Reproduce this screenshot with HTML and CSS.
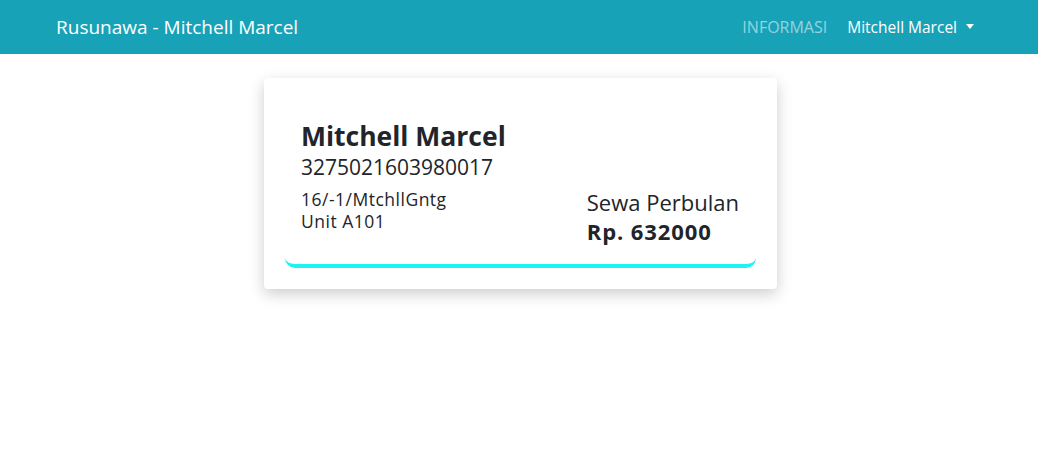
FILE: index.html
```html
<!DOCTYPE html>
<html>
<head>
<meta charset="utf-8">
<link rel="stylesheet" href="styles.css">
</head>
<body>
<nav class="navbar">
  <div class="brand">Rusunawa - Mitchell Marcel</div>
  <div class="nav-right">
    <span class="nav-link">INFORMASI</span>
    <span class="nav-user">Mitchell Marcel <span class="caret"></span></span>
  </div>
</nav>
<main class="main">
  <div class="card">
    <div class="inner">
      <div class="name">Mitchell Marcel</div>
      <div class="nik">3275021603980017</div>
      <div class="row">
        <div class="addr">
          <div>16/-1/MtchllGntg</div>
          <div>Unit A101</div>
        </div>
        <div class="rent">
          <div class="rent-label">Sewa Perbulan</div>
          <div class="rent-value">Rp. 632000</div>
        </div>
      </div>
    </div>
  </div>
</main>
</body>
</html>
```

FILE: styles.css
```css
* { box-sizing: border-box; }
body {
  margin: 0;
  font-family: "Open Sans", "Noto Sans", sans-serif;
  color: #212529;
  background: #fff;
}
.navbar {
  height: 54px;
  background: #17a2b8;
  display: flex;
  align-items: center;
  justify-content: space-between;
  padding: 0 64px 0 56px;
}
.brand {
  color: #fff;
  font-size: 19px;
}
.nav-right {
  display: flex;
  align-items: center;
  gap: 20px;
}
.nav-link { color: rgba(255,255,255,0.55); font-size: 16px; }
.nav-user { color: #fff; display: flex; align-items: center; gap: 9px; font-size: 15.5px; }
.caret {
  width: 0; height: 0;
  border-left: 4px solid transparent;
  border-right: 4px solid transparent;
  border-top: 5px solid #fff;
  margin-top: -2px;
}
.main {
  display: flex;
  justify-content: center;
  padding: 24px 0 60px;
}
.card {
  width: 513px;
  margin-left: 3px;
  background: #fff;
  border-radius: 4px;
  box-shadow: 0 5px 15px rgba(0,0,0,0.2);
  padding: 21px 21px 21px 21px;
}
.inner {
  border-bottom: 4px solid #1ef2f2;
  border-radius: 0 0 10px 10px;
  padding: 20px 16px 18px 16px;
}
.name {
  font-size: 26.5px;
  font-weight: 700;
  line-height: 34px;
}
.nik {
  font-size: 21px;
  line-height: 28px;
}
.row {
  display: flex;
  justify-content: space-between;
  margin-top: 7px;
}
.addr {
  font-size: 17.5px;
  line-height: 22px;
  letter-spacing: 0.5px;
}
.rent {
  margin-top: 0;
  margin-right: 1px;
  font-size: 22px;
  line-height: 29px;
}
.rent-value { font-weight: 700; letter-spacing: 0.9px; }
```
